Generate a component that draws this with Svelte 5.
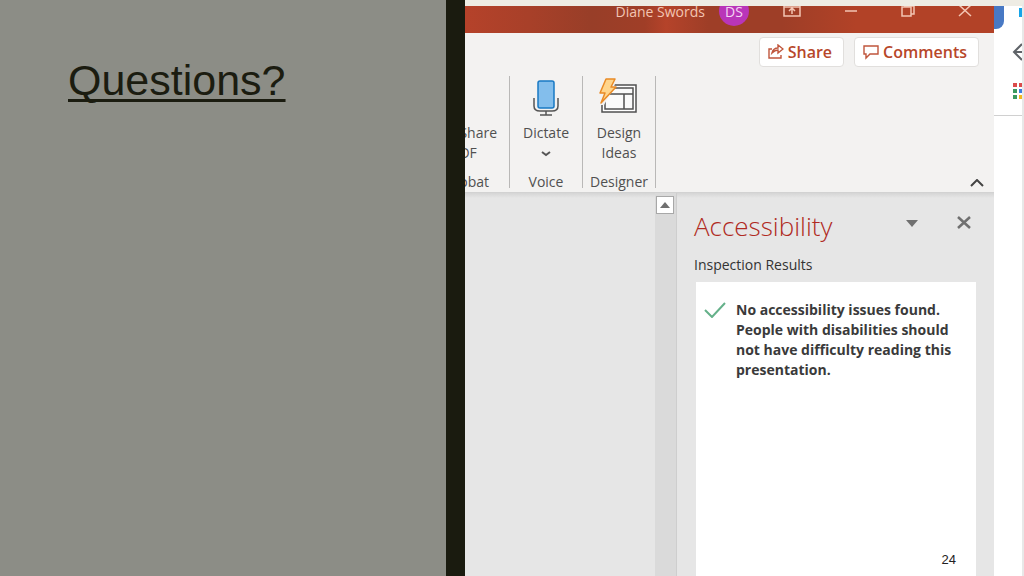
<script>
  const findings = [
    'No accessibility issues found.',
    'People with disabilities should',
    'not have difficulty reading this',
    'presentation.'
  ];
  const dots = ['#db4b4b', '#db4b4b', '#3a9a60', '#3c7de0', '#3a9a60', '#f2b720'];
</script>

<main class="slide">
  <section class="title-panel">
    <h1>Questions?</h1>
  </section>

  <section class="capture">
    <div class="app">
      <header class="titlebar">
        <span class="user">Diane Swords</span>
        <span class="avatar">DS</span>
        <button class="win ribbon-opt" aria-label="Ribbon display options">
          <svg width="18" height="13" viewBox="0 0 18 13"><path d="M1 0V10H17V0M1 1H17M9 8V3M6 5L9 2L12 5" /></svg>
        </button>
        <button class="win" aria-label="Minimize">
          <svg width="14" height="13" viewBox="0 0 14 13"><path d="M1 5H13" /></svg>
        </button>
        <button class="win" aria-label="Restore">
          <svg width="14" height="13" viewBox="0 0 14 13"><path d="M1 1H10V10H1ZM3 0H13V8H10" /></svg>
        </button>
        <button class="win" aria-label="Close">
          <svg width="14" height="13" viewBox="0 0 14 13"><path d="M1 -1L13 10M13 -1L1 10" /></svg>
        </button>
      </header>

      <div class="commands">
        <button class="command">
          <svg width="16" height="16" viewBox="0 0 16 16"><path d="M4 5H1V14H13V11M4 9C5 5 8 4 10 4V1L15 5L10 9V6C8 6 6 7 4 9Z" /></svg>
          Share
        </button>
        <button class="command">
          <svg width="16" height="16" viewBox="0 0 16 16"><path d="M1 2H15V10H7L3 14V10H1Z" /></svg>
          Comments
        </button>
      </div>

      <div class="ribbon">
        <div class="group acrobat">
          <button class="tool"><span>Share</span><span>DF</span></button>
          <span class="caption">obat</span>
        </div>
        <div class="group">
          <button class="tool">
            <svg width="40" height="42" viewBox="0 0 40 42">
              <rect x="12" y="5" width="16" height="27" rx="2" fill="#83beec" stroke="#1979c4" stroke-width="1.500" />
              <path d="M8 22V30Q8 35 14 35H26Q32 35 32 30V22M20 35V39M14 39H26" fill="none" stroke="#555" stroke-width="1.500" />
            </svg>
            <span>Dictate</span>
            <span class="drop"><svg width="10" height="7" viewBox="0 0 10 7"><path d="M1 2L5 5L9 2" fill="none" stroke="#555" stroke-width="2" /></svg></span>
          </button>
          <span class="caption">Voice</span>
        </div>
        <div class="group">
          <button class="tool">
            <svg width="40" height="42" viewBox="0 0 40 42">
              <rect x="3" y="9" width="34" height="27" fill="#fff" stroke="#505050" stroke-width="1.500" />
              <rect x="6" y="12" width="28" height="21" fill="#fafafa" stroke="#505050" stroke-width="1.500" />
              <path d="M6 18H34M25 18V33" stroke="#505050" stroke-width="1.500" />
              <path d="M0 0H19L14 13L5 29H0Z" fill="#f3f2f1" />
              <path d="M7 3H16L12 11H17L2 27L6 17H1Z" fill="#ffd58c" stroke="#e98a25" stroke-width="1.500" stroke-linejoin="round" />
            </svg>
            <span>Design</span><span>Ideas</span>
          </button>
          <span class="caption">Designer</span>
        </div>
        <button class="collapse" aria-label="Collapse the ribbon">
          <svg width="14" height="9" viewBox="0 0 14 9"><path d="M1 7L7 1L13 7" fill="none" stroke="#444" stroke-width="2" /></svg>
        </button>
      </div>

      <div class="workspace">
        <div class="canvas"></div>
        <div class="scrollbar">
          <button aria-label="Scroll up"><svg width="10" height="6" viewBox="0 0 10 6"><path d="M0 6L5 0L10 6Z" fill="#707070" /></svg></button>
        </div>
        <aside class="pane">
          <div class="pane-head">
            <h2>Accessibility</h2>
            <button aria-label="Task pane options"><svg width="14" height="14" viewBox="0 0 14 14"><path d="M1 4H13L7 11Z" fill="#707070" /></svg></button>
            <button aria-label="Close pane"><svg width="14" height="14" viewBox="0 0 14 14"><path d="M1 1L13 12M13 1L1 12" stroke="#707070" stroke-width="2.500" /></svg></button>
          </div>
          <h3>Inspection Results</h3>
          <div class="results">
            <svg width="22" height="16" viewBox="0 0 22 16"><path d="M1 8L8 15L21 1" fill="none" stroke="#65b18a" stroke-width="2" /></svg>
            <p>{#each findings as line}<span>{line}</span>{/each}</p>
          </div>
        </aside>
      </div>
    </div>

    <div class="browser">
      <div class="tabs"><i class="tab"></i><i class="icon"></i></div>
      <div class="tools">
        <svg width="10" height="20" viewBox="0 0 10 20"><path d="M10 2L2 10L10 18M2 10H10" fill="none" stroke="#5f6368" stroke-width="2" /></svg>
        <div class="dots">{#each dots as color}<i style:background={color}></i>{/each}</div>
      </div>
    </div>
  </section>
  <span class="page-number">24</span>
</main>

<style>
  :global(body) { margin: 0; }
  .slide {
    position: relative;
    display: grid;
    grid-template-columns: 465fr 559fr;
    min-height: 100vh;
    font-family: "Open Sans", "Noto Sans", sans-serif;
    font-size: 14px;
    line-height: 20px;
    color: #505050;
  }
  button {
    padding: 0;
    border: 0;
    background: none;
    font: inherit;
    color: inherit;
  }
  svg { display: block; flex: none; }
  h1, h2, h3, p { margin: 0; font-weight: 400; }
  .title-panel {
    box-sizing: border-box;
    padding: 55px 68px;
    background: #8c8d86;
    border-right: 19px solid #1a1b0f;
  }
  h1 {
    font: 43px/50px "Liberation Sans", Arial, sans-serif;
    color: #1b1c10;
    text-decoration: underline;
    text-decoration-thickness: 3px;
    text-decoration-skip-ink: none;
    text-underline-offset: 4px;
  }
  .capture {
    display: grid;
    grid-template-columns: 1fr 28px;
    min-width: 0;
    border-top: 6px solid #eeece4;
    border-right: 2px solid #e8e8e8;
  }
  .app {
    display: flex;
    flex-direction: column;
    min-width: 0;
    background: #f3f2f1;
  }
  .titlebar {
    display: flex;
    align-items: flex-start;
    justify-content: flex-end;
    height: 27px;
    padding-right: 22px;
    overflow: hidden;
    color: #f3c5b3;
    background: linear-gradient(90deg, #b5422a 0, #a84029 12%, #983e28 24%, #a03e27 34%, #b5432a 38%, #9e3e27 46%, #9e3e27 60%, #b24227 74%, #b24227 100%);
  }
  .user { margin-top: -4px; }
  .avatar {
    width: 30px;
    height: 30px;
    margin: -10px 48px 0 14px;
    border-radius: 50%;
    background: #b935b9;
    color: #f5d5f5;
    line-height: 32px;
    text-align: center;
  }
  .win { margin-left: 43px; }
  .ribbon-opt { margin-left: -14px; }
  .win svg { fill: none; stroke: #f3c5b3; stroke-width: 1.5; }
  .commands {
    display: flex;
    justify-content: flex-end;
    gap: 10px;
    padding: 4px 15px 9px;
  }
  .command {
    display: flex;
    align-items: center;
    gap: 4px;
    height: 30px;
    padding: 0 11px 0 8px;
    border: 1px solid #e1dfdd;
    border-radius: 4px;
    background: #fff;
    color: #b7472a;
    font-size: 16px;
    font-weight: 600;
  }
  .command svg { fill: none; stroke: #c0563c; stroke-width: 1.4; }
  .ribbon {
    display: flex;
    align-items: stretch;
    height: 112px;
    padding-bottom: 4px;
    border-bottom: 1px solid #d2d2d2;
  }
  .group {
    box-sizing: border-box;
    display: flex;
    flex-direction: column;
    align-items: center;
    justify-content: space-between;
    width: 73px;
    border-right: 1px solid #b9b8b7;
    white-space: nowrap;
  }
  .tool {
    display: flex;
    flex-direction: column;
    align-items: center;
  }
  .tool svg { margin-bottom: 5px; }
  .drop { display: grid; place-items: center; height: 20px; }
  .tool .drop svg { margin: 0; }
  .caption { line-height: 16px; margin-bottom: -2px; }
  .acrobat {
    width: 45px;
    align-items: flex-end;
    padding-right: 12px;
    overflow-x: clip;
  }
  .acrobat .tool { margin-top: 47px; align-items: flex-start; }
  .acrobat .caption { margin-right: 8px; }
  .collapse { align-self: flex-end; margin: 0 10px 0 auto; }
  .workspace {
    display: flex;
    flex: 1;
    background: linear-gradient(#d5d5d5, #e6e6e6 5px);
  }
  .canvas { flex: 1; }
  .scrollbar {
    box-sizing: border-box;
    width: 22px;
    padding: 3px 2px 0 1px;
    background: #dadada;
    border-right: 1px solid #cecece;
  }
  .scrollbar button {
    display: grid;
    place-items: center;
    width: 18px;
    height: 18px;
    border: 1px solid #a8a8a8;
    background: #fff;
  }
  .pane {
    box-sizing: border-box;
    display: flex;
    flex-direction: column;
    width: 317px;
    padding: 13px 18px 0 17px;
  }
  .pane-head { display: flex; align-items: flex-start; }
  .pane-head button { margin: 10px 5px 0 33px; }
  h2 {
    flex: 1;
    font-size: 26px;
    font-weight: 300;
    line-height: 40px;
    color: #b02a22;
  }
  h3 { margin-top: 9px; font-size: 14px; color: #333; }
  .results {
    display: flex;
    flex: 1;
    gap: 10px;
    align-items: flex-start;
    margin: 7px 0 0 2px;
    padding: 18px 8px;
    background: #fff;
  }
  .results svg { margin-top: 2px; }
  .results p { font-weight: 700; color: #3a3a3a; }
  .results span { display: block; white-space: nowrap; }
  .browser { background: #fff; overflow: hidden; }
  .tabs { display: flex; justify-content: space-between; height: 23px; }
  .tab { width: 10px; border-radius: 0 0 8px 0; background: #4879c4; }
  .icon { width: 3px; height: 9px; margin-top: 2px; background: #16a4e8; }
  .tools {
    display: flex;
    flex-direction: column;
    align-items: flex-end;
    gap: 21px;
    padding: 13px 0 16px;
    border-bottom: 1px solid #d0d0d0;
  }
  .dots { display: grid; grid-template-columns: 4px 3px; gap: 2px; }
  .dots i { height: 4px; }
  .page-number {
    position: absolute;
    right: 68px;
    bottom: 8px;
    font: 13px/16px "Liberation Sans", Arial, sans-serif;
    color: #222;
  }
</style>
